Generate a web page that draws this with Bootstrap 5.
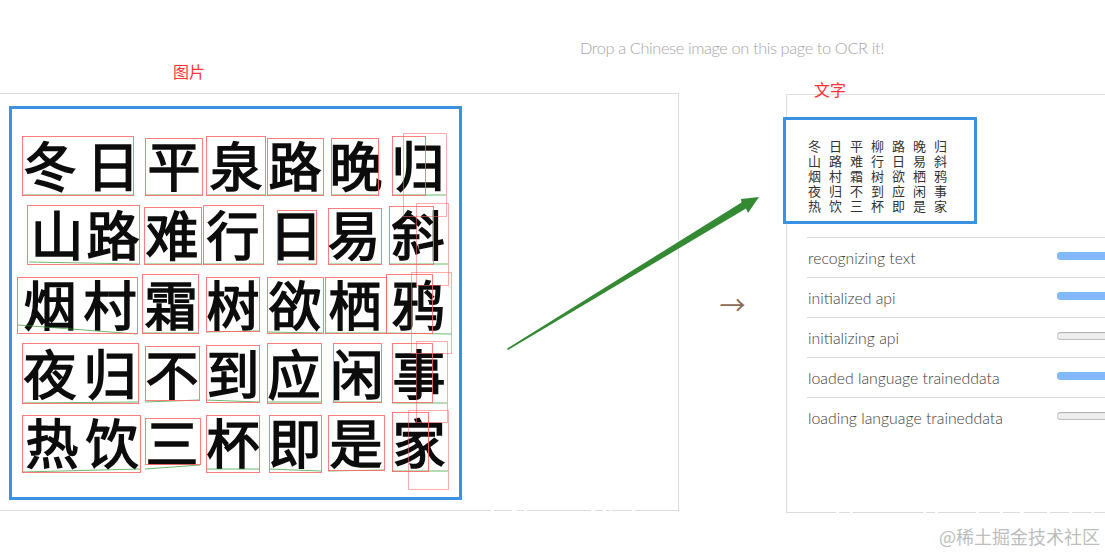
<!DOCTYPE html>
<html lang="zh">
<head>
<meta charset="utf-8">
<title>Chinese OCR</title>
<link href="https://cdn.jsdelivr.net/npm/bootstrap@5.3.0/dist/css/bootstrap.min.css" rel="stylesheet">
<style>
html,body{height:553px;overflow:hidden;background:#fff}
body{font-family:Lato,"Noto Sans CJK SC",sans-serif;font-weight:300;color:#555;position:relative}
.drop-hint{height:93px;padding:38px 0 0 580px;margin:0;font-size:16.4px;letter-spacing:-.4px;line-height:20px;color:#a6a6a6;font-weight:300;white-space:nowrap}
.stage{position:relative;width:1105px;height:420px}
.pane{position:relative;border:1px solid #dcdcdc;flex:none}
.pane-left{width:680px;height:418px;margin-left:-1px;padding:12px 0 0 9px}
.pane-right{width:420px;height:419px;margin-top:1px;padding-top:22px}
.arrow-gap{width:107px;flex:none;font-size:26px;line-height:30px;color:#8a6a55;padding-top:196px;font-family:"Noto Sans CJK SC",sans-serif;font-weight:400;text-align:center}
.tag{position:absolute;color:#f33;font-size:16px;line-height:18px;font-family:"Noto Sans CJK SC",sans-serif;font-weight:400}
.tag-left{left:173px;top:-32px}
.tag-right{left:27px;top:-15px}
.shot-frame{width:453px;height:394px;border:3px solid #3b92e3;background:#fff}
.shot-frame svg{display:block}
.glyphs{font-family:"Noto Sans CJK SC",sans-serif;font-weight:400;font-size:53px;fill:#0c0c0c;stroke:#0c0c0c;stroke-width:1.5px;filter:blur(.5px);text-anchor:middle}
.boxes rect{fill:none;stroke:#f66;stroke-width:1;opacity:.85}
.boxes .faint{opacity:.55}
.bases line{stroke:#2f9a2f;stroke-width:1;opacity:.7}
.text-frame{width:194px;height:107px;margin-left:-4px;border:3px solid #3b92e3;background:#fff;padding:18px 0 0 18px}
.ocr-line{display:grid;grid-template-columns:repeat(7,21px);font-family:"Noto Sans CJK SC",sans-serif;font-weight:400;font-size:13px;line-height:15px;color:#333;text-align:center}
.steps{margin:13px 0 0 20px;border-radius:0;--bs-list-group-bg:transparent}
.steps .list-group-item{display:flex;height:40px;padding:0;border-top:1px solid #dcdcdc;border-bottom:0;background:transparent;font-size:15.8px;font-weight:300;color:#404040;line-height:20px;padding-top:10px;padding-left:1px;white-space:nowrap}
.step-name{width:249px;flex:none}
.step-bar{width:120px;height:8px;flex:none;margin-top:4px;border-radius:4px;background:#eee;box-shadow:inset 0 1px 1px #aaa,inset 0 -1px 1px #bbb}
.step-bar .progress-bar{background:#83b8f9}
.green-arrow{position:absolute;left:0;top:0;pointer-events:none}
.green-arrow polygon{fill:#338a33}
.green-arrow rect{fill:#fff}
.mark-text{position:absolute;right:5px;bottom:5px;font-family:"Noto Sans CJK SC",sans-serif;font-weight:400;font-size:18px;line-height:24px;color:#bdbdbd}
</style>
</head>
<body>
<p class="drop-hint">Drop a Chinese image on this page to OCR it!</p>
<div class="stage d-flex">
  <section class="pane pane-left">
    <span class="tag tag-left">图片</span>
    <div class="shot-frame">
      <svg width="447" height="388" viewBox="12 109 447 388" aria-label="图片">
        <g class="glyphs">
          <text x="50 113 174 236 295 356 418" y="187">冬日平泉路晚归</text>
          <text x="57 113 172 233 296 354 418" y="256">山路难行日易斜</text>
          <text x="50 110 171 233 295 355 418" y="326">烟村霜树欲栖鸦</text>
          <text x="50 110 172 233 294 357 419" y="395">夜归不到应闲事</text>
          <text x="52 112 172 233 295 356 419" y="464">热饮三杯即是家</text>
        </g>
        <g class="bases">
          <line x1="22" y1="195" x2="133" y2="195"/><line x1="145" y1="195" x2="202" y2="195"/><line x1="206" y1="195" x2="265" y2="195"/><line x1="267" y1="195" x2="323" y2="195"/><line x1="331" y1="195" x2="378" y2="195"/><line x1="392" y1="195" x2="446" y2="195"/>
          <line x1="29" y1="262" x2="139" y2="264"/><line x1="144" y1="264" x2="201" y2="264"/><line x1="203" y1="264" x2="263" y2="264"/><line x1="277" y1="264" x2="316" y2="264"/><line x1="328" y1="264" x2="381" y2="264"/><line x1="389" y1="264" x2="448" y2="264"/>
          <line x1="18" y1="325" x2="137" y2="334"/><line x1="142" y1="333" x2="198" y2="333"/><line x1="206" y1="332" x2="259" y2="331"/><line x1="267" y1="332" x2="323" y2="333"/><line x1="325" y1="333" x2="386" y2="333"/><line x1="386" y1="333" x2="452" y2="334"/>
          <line x1="22" y1="403" x2="138" y2="402"/><line x1="145" y1="402" x2="199" y2="400"/><line x1="206" y1="400" x2="259" y2="402"/><line x1="267" y1="402" x2="321" y2="402"/><line x1="333" y1="402" x2="381" y2="402"/><line x1="392" y1="403" x2="447" y2="403"/>
          <line x1="22" y1="472" x2="140" y2="469"/><line x1="145" y1="469" x2="200" y2="465"/><line x1="206" y1="469" x2="259" y2="469"/><line x1="269" y1="469" x2="321" y2="471"/><line x1="328" y1="471" x2="384" y2="470"/><line x1="392" y1="471" x2="448" y2="471"/>
        </g>
        <g class="boxes">
          <rect x="22.5" y="136.5" width="111" height="59"/><rect x="145.5" y="138.5" width="57" height="57"/><rect x="206.5" y="136.5" width="59" height="59"/><rect x="267.5" y="138.5" width="56" height="57"/><rect x="331.5" y="138.5" width="47" height="57"/><rect x="392.5" y="136.5" width="33" height="59"/><rect class="faint" x="403.5" y="133.5" width="43" height="83"/>
          <rect x="27.5" y="205.5" width="112" height="59"/><rect x="144.5" y="207.5" width="57" height="57"/><rect x="203.5" y="205.5" width="60" height="59"/><rect x="277.5" y="210.5" width="39" height="54"/><rect x="328.5" y="208.5" width="53" height="56"/><rect x="389.5" y="206.5" width="44" height="58"/><rect class="faint" x="416.5" y="203.5" width="32" height="82"/>
          <rect x="17.5" y="277.5" width="120" height="56"/><rect x="142.5" y="274.5" width="56" height="59"/><rect x="206.5" y="277.5" width="53" height="54"/><rect x="267.5" y="277.5" width="56" height="56"/><rect x="325.5" y="277.5" width="61" height="56"/><rect x="386.5" y="274.5" width="46" height="59"/><rect class="faint" x="411.5" y="272.5" width="40" height="81"/>
          <rect x="22.5" y="343.5" width="116" height="60"/><rect x="145.5" y="346.5" width="54" height="54"/><rect x="206.5" y="345.5" width="53" height="57"/><rect x="267.5" y="343.5" width="54" height="60"/><rect x="333.5" y="343.5" width="48" height="59"/><rect x="392.5" y="343.5" width="40" height="59"/><rect class="faint" x="416.5" y="341.5" width="31" height="81"/>
          <rect x="22.5" y="415.5" width="118" height="57"/><rect x="145.5" y="418.5" width="55" height="46"/><rect x="206.5" y="415.5" width="53" height="57"/><rect x="269.5" y="415.5" width="52" height="57"/><rect x="328.5" y="415.5" width="56" height="55"/><rect x="392.5" y="412.5" width="36" height="59"/><rect class="faint" x="408.5" y="410.5" width="40" height="79"/>
        </g>
      </svg>
    </div>
  </section>
  <div class="arrow-gap">→</div>
  <section class="pane pane-right">
    <span class="tag tag-right">文字</span>
    <div class="text-frame">
      <div class="ocr-line"><span>冬</span><span>日</span><span>平</span><span>柳</span><span>路</span><span>晚</span><span>归</span></div>
      <div class="ocr-line"><span>山</span><span>路</span><span>难</span><span>行</span><span>日</span><span>易</span><span>斜</span></div>
      <div class="ocr-line"><span>烟</span><span>村</span><span>霜</span><span>树</span><span>欲</span><span>栖</span><span>鸦</span></div>
      <div class="ocr-line"><span>夜</span><span>归</span><span>不</span><span>到</span><span>应</span><span>闲</span><span>事</span></div>
      <div class="ocr-line"><span>热</span><span>饮</span><span>三</span><span>杯</span><span>即</span><span>是</span><span>家</span></div>
    </div>
    <ul class="list-group list-group-flush steps">
      <li class="list-group-item"><span class="step-name">recognizing text</span><div class="progress step-bar"><div class="progress-bar w-100"></div></div></li>
      <li class="list-group-item"><span class="step-name">initialized api</span><div class="progress step-bar"><div class="progress-bar w-100"></div></div></li>
      <li class="list-group-item"><span class="step-name">initializing api</span><div class="progress step-bar"></div></li>
      <li class="list-group-item"><span class="step-name">loaded language traineddata</span><div class="progress step-bar"><div class="progress-bar w-100"></div></div></li>
      <li class="list-group-item"><span class="step-name">loading language traineddata</span><div class="progress step-bar"></div></li>
    </ul>
  </section>
</div>
<svg class="green-arrow" width="1105" height="553" viewBox="0 0 1105 553" aria-hidden="true">
  <polygon points="507,348.6 741.5,202.5 741,199 759,197 748,213 746,208.5 508,350"/>
  <rect x="491" y="509" width="3" height="3"/><rect x="512" y="509" width="5" height="3"/><rect x="524" y="509" width="3" height="3"/><rect x="591" y="509" width="4" height="3"/><rect x="603" y="509" width="3" height="3"/><rect x="610" y="509" width="2" height="3"/><rect x="632" y="509" width="3" height="3"/>
  <rect x="836" y="511" width="3" height="3"/><rect x="850" y="511" width="3" height="3"/><rect x="923" y="511" width="3" height="3"/><rect x="935" y="511" width="3" height="3"/><rect x="976" y="511" width="3" height="3"/><rect x="1000" y="511" width="3" height="3"/><rect x="1020" y="511" width="4" height="3"/><rect x="1047" y="511" width="3" height="3"/><rect x="1069" y="511" width="3" height="3"/><rect x="1091" y="511" width="3" height="3"/>
</svg>
<div class="mark-text">@稀土掘金技术社区</div>
<script src="https://cdn.jsdelivr.net/npm/bootstrap@5.3.0/dist/js/bootstrap.bundle.min.js"></script>
</body>
</html>
